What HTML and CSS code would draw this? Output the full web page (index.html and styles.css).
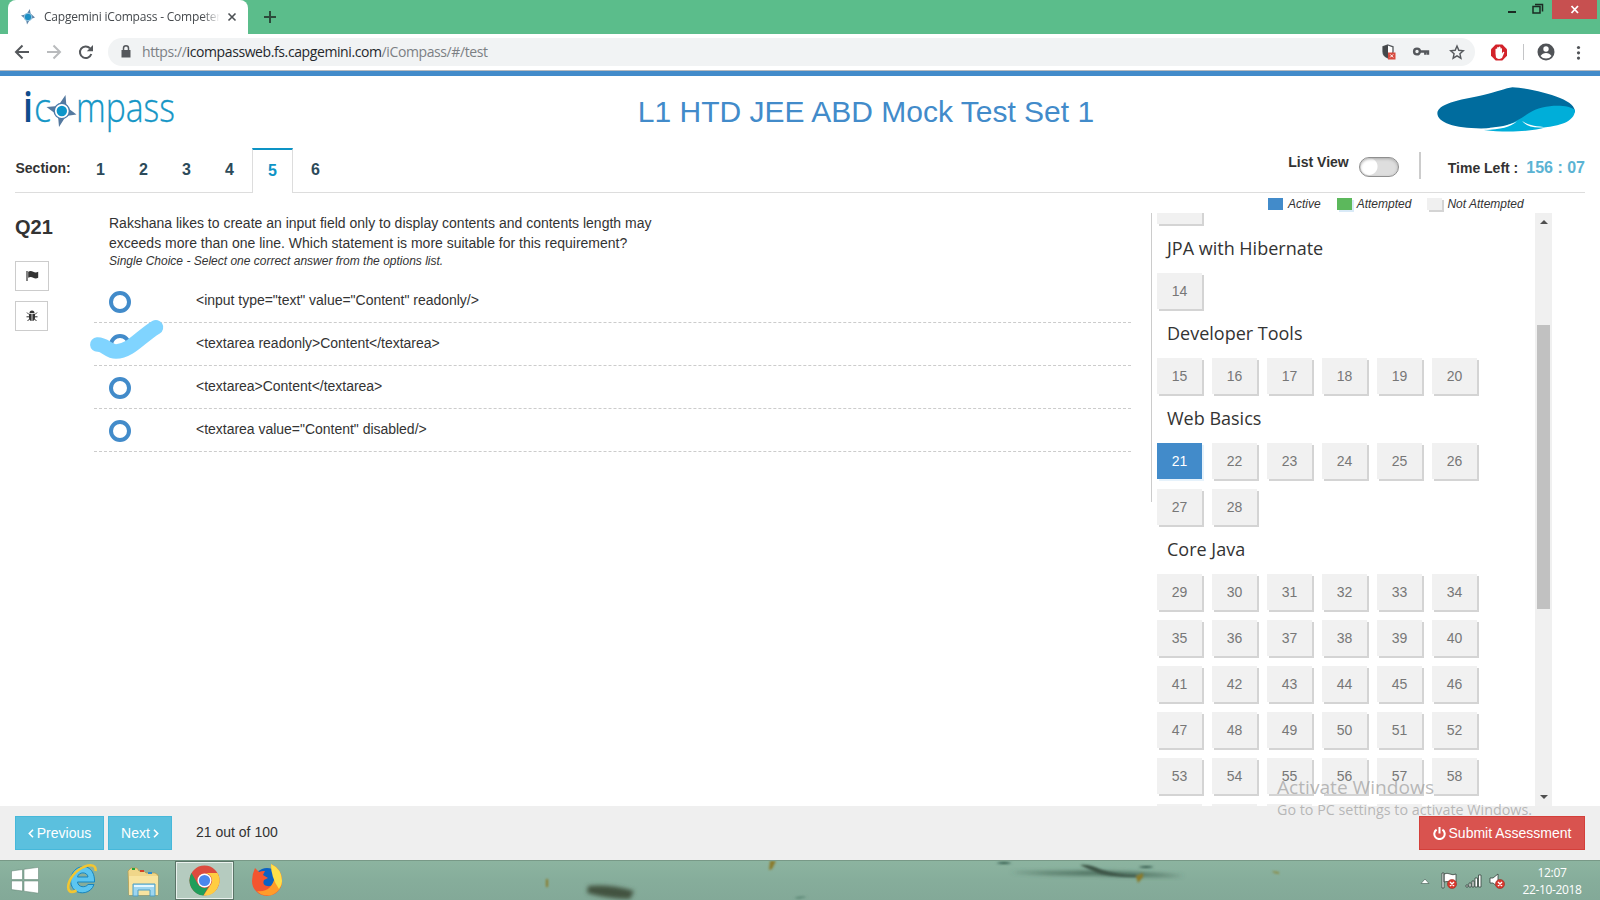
FILE: index.html
```html
<!DOCTYPE html>
<html lang="en">
<head>
<meta charset="utf-8">
<title>Capgemini iCompass - Competency</title>
<link rel="stylesheet" href="styles.css">
</head>
<body>
<div class="screen">
  <header class="tabstrip">
    <div class="tab">
      <svg class="favicon" width="16" height="16" viewBox="0 0 16 16"><path d="M9.800 0l.8 4.500L15 8.500l-4.800 1.800L7 15.500l-1-5L1 6.500l5.500-1.200z" fill="#5d84a8"/><circle cx="8" cy="8" r="3.800" fill="#1d8fc4" stroke="#9dc7e0"/></svg>
      <span class="tab-title">Capgemini iCompass - Competency</span>
      <svg class="tab-close" width="10" height="10" viewBox="0 0 10 10"><path d="M1.500 1.500l7 7M8.500 1.500l-7 7" stroke="#4c5054" stroke-width="1.600"/></svg>
    </div>
    <svg class="newtab" width="12" height="12" viewBox="0 0 12 12"><path d="M6 0v12M0 6h12" stroke="#2c4a3b" stroke-width="2"/></svg>
    <div class="winctl">
      <svg width="92" height="20" viewBox="0 0 92 20"><path d="M3 12h8" stroke="#1b2b23" stroke-width="2"/><path d="M28 6.500h7v6.500h-7zM30 4.500h7.500v7" fill="none" stroke="#1b2b23" stroke-width="1.500"/><path d="M47 0h45v19H47z" fill="#c75050"/><path d="M66.500 6l6.500 7M73 6l-6.500 7" stroke="#fff" stroke-width="1.800"/></svg>
    </div>
  </header>
  <div class="toolbar">
    <svg class="nav" width="80" height="16" viewBox="0 0 80 16" fill="none" stroke-width="2"><path d="M15 8H2M8.500 1.500L2 8l6.500 6.500" stroke="#55585c"/><path d="M33 8h13M39.500 1.500L46 8l-6.500 6.500" stroke="#b9bbbd"/><path d="M76 4.200A5.800 5.800 0 1 0 77.300 10" stroke="#55585c"/><path d="M79 1v6.200h-6.200z" fill="#55585c"/></svg>
    <div class="omnibox">
      <svg class="lock" width="10" height="13" viewBox="0 0 10 13"><path d="M.5 5h9v7.500h-9z" fill="#55585c"/><path d="M2.500 5V3.300a2.500 2.500 0 0 1 5 0V5" fill="none" stroke="#55585c" stroke-width="1.500"/></svg>
      <span class="url">https://<b>icompassweb.fs.capgemini.com</b>/iCompass/#/test</span>
      <svg class="omni-icons" width="84" height="18" viewBox="0 0 84 18"><path d="M7 2l5 1.800v4.700c0 3.500-2.500 5.500-5 6.500-2.500-1-5-3-5-6.500V3.800z" fill="#fff" stroke="#55585c" stroke-width="1.300"/><path d="M7 2v13c-2.500-1-5-3-5-6.500V3.800z" fill="#44474a"/><path d="M7 9.500h7.500v7H7z" fill="#d84a3e"/><path d="M9.200 11.400l3 3m0-3l-3 3" stroke="#fff"/><circle cx="36" cy="8.500" r="2.900" fill="none" stroke="#55585c" stroke-width="2.400"/><path d="M39 8.500h8v3.200M44.300 8.500v3.200" fill="none" stroke="#55585c" stroke-width="2.400"/><path d="M76 3l1.800 4.300 4.500.4-3.400 3 1 4.500-3.900-2.400-3.900 2.400 1-4.500-3.400-3 4.500-.4z" fill="none" stroke="#55585c" stroke-width="1.400"/></svg>
    </div>
    <svg class="ext" width="100" height="20" viewBox="0 0 100 20"><path d="M12.700 2.500h6.600L24 7.200v6.600l-4.700 4.700h-6.600L8 13.800V7.200z" fill="#d3232a"/><path d="M12.500 11.500V7q.8-1 1.600 0V5.500q.8-1 1.700 0V5q.8-1 1.700 0v1.500q.9-.7 1.500 0v5l1-1.500q1.200-.5 1.300.4L19 16q-4 2-6-.5z" fill="#fff"/><path d="M40.500 2v16" stroke="#c4c5c7"/><circle cx="63" cy="10" r="8.500" fill="#505357"/><circle cx="63" cy="7" r="2.700" fill="#fff"/><path d="M57.500 14q2-3 5.500-3t5.500 3q-2 2.500-5.500 2.500T57.500 14z" fill="#fff"/><g fill="#505357"><circle cx="95.500" cy="5.500" r="1.600"/><circle cx="95.500" cy="10.800" r="1.600"/><circle cx="95.500" cy="16.100" r="1.600"/></g></svg>
  </div>

  <div class="brandbar">
    <svg class="logo" width="158" height="50" viewBox="0 0 158 50">
      <g font-family="Open Sans, sans-serif">
        <text x="3" y="36" font-size="42" font-weight="600" fill="#0f4c8c" textLength="10" lengthAdjust="spacingAndGlyphs">i</text>
        <text x="14" y="36" font-size="40" font-weight="300" fill="#1596c6" stroke="#1596c6" stroke-width=".3" textLength="17" lengthAdjust="spacingAndGlyphs">c</text>
        <text x="56" y="36" font-size="40" font-weight="300" fill="#1596c6" stroke="#1596c6" stroke-width=".3" textLength="99" lengthAdjust="spacingAndGlyphs">mpass</text>
      </g>
      <path d="M45.500 9l1 12 10 7.500L46 30l-7 11-1-11.500L26.500 21l11.500-1z" fill="#55799f"/>
      <circle cx="41.800" cy="25" r="7.600" fill="#fff" stroke="#4a79a8" stroke-width="1.400"/><circle cx="41.800" cy="25" r="5.200" fill="#0d95c9"/>
    </svg>
    <h1 class="title">L1 HTD JEE ABD Mock Test Set 1</h1>
    <svg class="brand" width="139" height="46" viewBox="531 259 417 138"><path d="M532 337C534 306 620 294 670 283C712 274 738 262 757 260C800 262 860 276 900 292C930 304 945 318 945 335L810 370L700 382C600 388 532 370 532 337z" fill="#006c9e"/><path d="M945 328C925 311 850 309 806 338C770 362 740 382 672 388C740 397 820 392 857 380C890 376 945 366 945 328z" fill="#00aed9"/><path d="M690 381C725 379 752 372 771 362C752 380 722 387 672 388zM786 360C798 372 830 378 860 379C825 384 798 378 786 360z" fill="#fff"/></svg>
  </div>

  <nav class="sections">
    <span class="sec-label">Section:</span>
    <span class="sec">1</span><span class="sec">2</span><span class="sec">3</span><span class="sec">4</span><span class="sec on">5</span><span class="sec">6</span>
    <div class="status">
      <span class="listview">List View</span>
      <span class="toggle"></span>
      <span class="divider"></span>
      <span class="timelabel">Time Left :</span>
      <span class="time">156 : 07</span>
    </div>
  </nav>

  <main class="main">
    <aside class="qside">
      <div class="qno">Q21</div>
      <button class="tool flag"><svg width="13" height="12" viewBox="0 0 13 12"><path d="M1 1v10" stroke="#333" stroke-width="1.200"/><path d="M2.200 1.700q2.500-1.400 5 0t5 0v6q-2.500 1.400-5 0t-5 0z" fill="#333"/></svg></button>
      <button class="tool bug"><svg width="12" height="12" viewBox="0 0 12 12"><path d="M3.500 3a2.500 2.500 0 0 1 5 0zM3 3.700h2.600V11C4 11 3 9.500 3 8zM6.400 3.700H9V8c0 1.500-1 3-2.600 3z" fill="#333"/><path d="M1 2.500l2 2M11 2.500l-2 2M.5 6.800H3M9 6.800h2.500M1.500 11L3.500 9M10.500 11l-2-2" stroke="#333"/></svg></button>
    </aside>
    <section class="question">
      <p class="qtext">Rakshana likes to create an input field only to display contents and contents length may<br>exceeds more than one line. Which statement is more suitable for this requirement?</p>
      <p class="hint">Single Choice - Select one correct answer from the options list.</p>
      <ul class="options">
        <li><span class="ring"></span><span>&lt;input type="text" value="Content" readonly/&gt;</span></li>
        <li><span class="ring"></span><span>&lt;textarea readonly&gt;Content&lt;/textarea&gt;</span>
          <svg class="tick" width="90" height="50" viewBox="85 310 90 50"><path d="M97.300 344.500C105 344 108 351.500 116 351.500C130 351.500 140 337 156 327.200" fill="none" stroke="#80d4ff" stroke-width="14.500" stroke-linecap="round"/></svg></li>
        <li><span class="ring"></span><span>&lt;textarea&gt;Content&lt;/textarea&gt;</span></li>
        <li><span class="ring"></span><span>&lt;textarea value="Content" disabled/&gt;</span></li>
      </ul>
    </section>
    <section class="side">
      <div class="legend"><i class="sw active"></i><span>Active</span><i class="sw done"></i><span>Attempted</span><i class="sw"></i><span>Not Attempted</span></div>
      <div class="palette">
        <div class="plist">
          <div class="grid"><a></a></div>
          <h2>JPA with Hibernate</h2>
          <div class="grid"><a>14</a></div>
          <h2>Developer Tools</h2>
          <div class="grid"><a>15</a><a>16</a><a>17</a><a>18</a><a>19</a><a>20</a></div>
          <h2>Web Basics</h2>
          <div class="grid"><a class="cur">21</a><a>22</a><a>23</a><a>24</a><a>25</a><a>26</a><a>27</a><a>28</a></div>
          <h2>Core Java</h2>
          <div class="grid"><a>29</a><a>30</a><a>31</a><a>32</a><a>33</a><a>34</a><a>35</a><a>36</a><a>37</a><a>38</a><a>39</a><a>40</a><a>41</a><a>42</a><a>43</a><a>44</a><a>45</a><a>46</a><a>47</a><a>48</a><a>49</a><a>50</a><a>51</a><a>52</a><a>53</a><a>54</a><a>55</a><a>56</a><a>57</a><a>58</a><a></a><a></a><a></a><a></a><a></a><a></a></div>
        </div>
        <div class="scroll"><i class="up"></i><i class="thumb"></i><i class="down"></i></div>
      </div>
    </section>
  </main>

  <footer class="actions">
    <button class="btn prev"><svg width="6" height="9" viewBox="0 0 6 9"><path d="M5 .7L1.300 4.500 5 8.300" fill="none" stroke="#fff" stroke-width="1.600"/></svg>Previous</button>
    <button class="btn next">Next<svg width="6" height="9" viewBox="0 0 6 9"><path d="M1 .7l3.700 3.800L1 8.300" fill="none" stroke="#fff" stroke-width="1.600"/></svg></button>
    <span class="count">21 out of 100</span>
    <button class="btn submit"><svg width="13" height="13" viewBox="0 0 13 13"><path d="M3.600 2.600a5.200 5.200 0 1 0 5.800 0M6.500 0v6.500" fill="none" stroke="#fff" stroke-width="2"/></svg>Submit Assessment</button>
  </footer>

  <svg class="watermark" width="270" height="50" viewBox="0 0 270 50" font-family="Open Sans, sans-serif" fill="#a0a0a0" fill-opacity=".72"><text x="2" y="24" font-size="19" textLength="157" lengthAdjust="spacingAndGlyphs">Activate Windows</text><text x="2" y="45" font-size="14.500" textLength="255" lengthAdjust="spacingAndGlyphs">Go to PC settings to activate Windows.</text></svg>

  <div class="taskbar">
    <svg class="wall" width="1600" height="39" viewBox="0 0 1600 39">
      <defs><filter id="soft" x="-20%" y="-80%" width="140%" height="260%"><feGaussianBlur stdDeviation="2"/></filter><filter id="fine" x="-50%" y="-80%" width="200%" height="260%"><feGaussianBlur stdDeviation=".8"/></filter></defs>
      <path d="M588 25q22-2 46 5l-4 8q-22 0-43-6z" fill="#43523f" filter="url(#soft)"/>
      <path d="M1010 11q50 0 80-1 50 1 95 5-50 1-90-1-50 0-85-3z" fill="#3f6251" filter="url(#soft)"/>
      <g filter="url(#fine)"><path d="M1080 4q10-1 22 5 16 5 35 5v2q-30 0-42-5z" fill="#3d5547"/><path d="M546 18h2v8h-2zM770 0h6l-4 8-3 1zM1136 15l7-3v4l-5 6z" fill="#8a7a2c"/><path d="M1272 10l7 1v2l-5-1z" fill="#8a8a40"/><path d="M996 2q8-2 16 0-8 2-16 0zM1138 6q9-2 16 0-8 2-16 0z" fill="#31574a"/><path d="M794 37q6-3 13-1l-8 2z" fill="#5f8a78"/></g>
    </svg>
    <svg class="start" width="28" height="27" viewBox="0 0 28 27"><path d="M.5 4L11.500 2.500V12.500H.5zM13 2.300L27.500.3v12.200H13zM.5 14h11v10L.5 22.600zM13 14h14.500v12.200L13 24.200z" fill="#fff" stroke="#5d7f6e" stroke-width=".5"/></svg>
    <svg class="ie" width="32" height="32" viewBox="0 0 32 32"><path d="M28.500 19H11.500c.5 5.500 8 6 10.500 2.500h6C25 30.500 14 32 8.500 27 2 21 4 8 13 4.500 22 1 29 8 28.500 19zM11.500 14H22c-.5-5.500-9.500-5.500-10.500 0z" fill="#5cc5f0" stroke="#1985bd"/><path d="M29.500 8C30.500 0 21 1 12.500 7 4 13 0 24 3.500 28c1.500 1.500 5 .5 7-.5" fill="none" stroke="#f2c632" stroke-width="2.600"/></svg>
    <svg class="folder" width="34" height="32" viewBox="0 0 34 32"><path d="M2 5l3-3h6l2 3h5l2 2h9l3 2v20H3z" fill="#f0d689" stroke="#b79a4b" stroke-width=".7"/><path d="M6 2h3v2H6z" fill="#22a33b"/><path d="M14 4h4v2h-4z" fill="#d34328"/><path d="M22 6h4v2h-4z" fill="#2b8bd0"/><path d="M3 10h29v19H3z" fill="#f8e4a0"/><path d="M7 18h22v12h-5v-6H12v6H7z" fill="#9dd5ef" stroke="#4f9fc4"/><path d="M8 20h20" stroke="#e4f7ff" stroke-width="2"/></svg>
    <div class="running"><svg width="31" height="31" viewBox="-15.500 -15.500 31 31"><circle r="15" fill="#dc4b3e"/><path d="M-13-7.500L-6.500 3.700A7.500 7.500 0 0 0 3.700 6.500L-1 15A15 15 0 0 1-13-7.500z" fill="#1f9e5b"/><path d="M0-7.500H13A15 15 0 0 1-1 15L6.500 3.750A7.500 7.500 0 0 0 0-7.500z" fill="#ffcd42"/><circle r="7" fill="#fff"/><circle r="5.600" fill="#4a87ee"/></svg></div>
    <svg class="fox" width="32" height="32" viewBox="0 0 32 32"><circle cx="16" cy="17" r="13" fill="#0b62c4"/><path d="M4 4l4 4q3-1.500 6-1l-2 4 5 3-4 2q-2 5 3 6 7 1 9-6 1-9-5-16 11 5 11 17A15 15 0 0 1 1 17Q1 10 4 4z" fill="#f4552f"/><path d="M20 0q11 5 11 17a15 15 0 0 1-12 14.500Q10 32 6 27q14 2 18-14Q20 8 20 0z" fill="#ff9c2a"/><path d="M20 0q11 5 11 17 0 4-3 8Q20 14 20 0z" fill="#ffe04a"/></svg>
    <svg class="tray" width="90" height="20" viewBox="0 0 90 20"><path d="M1 12.500h8l-4-4.500z" fill="#fff" stroke="#50695e" stroke-width=".7"/><path d="M22 2h2v15h-2zM24 3q3-1.500 6 0t6 0v8q-3 1-6 0t-6 0z" fill="#fff" stroke="#36423c" stroke-width=".8"/><path d="M46 14h2v2h-2zM49 12h2v4h-2zM52 10h2v6h-2zM55 7h2.500v9H55zM58.500 4H61v12h-2.500z" fill="#fff" stroke="#36423c" stroke-width=".8"/><path d="M70 7h3l5-4v13l-5-4h-3z" fill="#fff" stroke="#36423c" stroke-width=".8"/><g fill="#d8372d" stroke="#8d2a22" stroke-width=".5"><circle cx="32" cy="13" r="4.600"/><circle cx="80" cy="13" r="4.600"/></g><path d="M30 11l4 4m0-4l-4 4M78 11l4 4m0-4l-4 4" stroke="#fff" stroke-width="1.400"/></svg>
    <div class="clock"><span class="hm">12:07</span><span class="dmy">22-10-2018</span></div>
  </div>
</div>
</body>
</html>
```

FILE: styles.css
```css
* { box-sizing: border-box; }
body { margin: 0; background: #fff; font-family: "Liberation Sans", Arial, sans-serif; font-size: 14px; color: #333; }
.screen { position: relative; width: 1600px; height: 900px; overflow: hidden; display: flex; flex-direction: column; }
svg { display: block; flex: none; }
p, h1, h2, ul { margin: 0; padding: 0; font-weight: normal; }

/* Browser window */
.tabstrip { height: 34px; flex: none; background: #5bbd8b; display: flex; padding-left: 8px; }
.tab { width: 240px; height: 34px; background: #fff; border-radius: 8px 8px 0 0; display: flex; align-items: center; padding-left: 12px; }
.tab-title { width: 176px; margin-left: 8px; font: 12px/18px "Open Sans", sans-serif; letter-spacing: -.2px; color: #45494d; white-space: nowrap; overflow: hidden; -webkit-mask-image: linear-gradient(90deg, #000 90%, transparent 100%); mask-image: linear-gradient(90deg, #000 90%, transparent 100%); }
.tab-close { margin-left: 7px; }
.newtab { margin: 11px 0 0 16px; }
.winctl { margin-left: auto; padding-right: 3px; }
.toolbar { height: 37px; flex: none; display: flex; align-items: center; padding: 0 3px 1px 14px; border-bottom: 1px solid #b5bac0; }
.omnibox { width: 1367px; height: 28px; margin-left: 14px; padding: 0 10px 0 13px; background: #f1f3f4; border-radius: 14px; display: flex; align-items: center; }
.url { margin-left: 11px; font: 14px/20px "Open Sans", sans-serif; letter-spacing: -.4px; color: #7c8084; white-space: nowrap; }
.url b { font-weight: 400; color: #25282c; }
.omni-icons { margin-left: auto; }
.ext { margin-left: 8px; }

/* Assessment header */
.brandbar { height: 77px; flex: none; border-top: 5px solid #428bca; display: flex; align-items: flex-start; padding: 11px 23px 0 20px; }
.logo { margin-top: -1px; overflow: visible; }
.title { flex: 1; text-align: center; font-size: 30px; line-height: 36px; color: #428bca; padding: 7px 0 0 117px; }
.brand { margin-right: 1px; }
.sections { height: 45px; flex: none; display: flex; margin: 0 15px; background: linear-gradient(#ddd, #ddd) bottom / 100% 1px no-repeat; }
.sec-label { width: 65px; padding: 12px 0 0 .5px; line-height: 16px; font-weight: bold; }
.sec { width: 41px; margin-right: 2px; height: 45px; padding-top: 13px; text-align: center; font-size: 16px; line-height: 18px; font-weight: bold; color: #2c4a5a; }
.sec.on { background: #fff; border: 1px solid #ddd; border-top: 2px solid #0d93c5; border-bottom: 0; padding-top: 12px; color: #0d93c5; }
.status { margin-left: auto; display: flex; font-weight: bold; line-height: 16px; }
.listview { padding-top: 6px; }
.toggle { width: 40px; height: 20px; margin: 9px 20px 0 10px; border: 1.500px solid #8f8f8f; border-radius: 10px; background: radial-gradient(circle at 9px 8.500px, #fff 8px, #dedede 9px); box-shadow: inset 0 1px 3px #aaa; }
.divider { width: 2px; height: 27px; margin-top: 4px; background: #ccc; }
.timelabel { margin: 12px 8px 0 27px; }
.time { padding-top: 11px; font-size: 16px; line-height: 17px; color: #5bb3d3; }

/* Question */
.main { height: 613px; flex: none; display: flex; padding-left: 15px; }
.qside { width: 79px; padding-top: 22px; }
.qno { font-size: 20px; font-weight: bold; line-height: 24px; margin-bottom: 22px; }
.tool { display: flex; align-items: center; justify-content: center; width: 34px; height: 30px; padding: 0; margin-bottom: 10px; border: 1px solid #ccc; background: #fff; }
.tool.bug { width: 33px; }
.question { width: 1037px; padding-top: 20px; }
.qtext { padding-left: 15px; line-height: 20px; }
.hint { padding-left: 15px; font-size: 12px; line-height: 16px; font-style: italic; }
.options { margin-top: 11px; list-style: none; }
.options li { position: relative; display: flex; align-items: center; height: 43px; padding: 0 0 2px 15px; border-bottom: 1px dashed #ccc; letter-spacing: -.02px; }
.ring { width: 22px; height: 22px; margin: 4px 65px 0 0; border: 4px solid #428bca; border-radius: 50%; }
.tick { position: absolute; left: -9px; top: -13px; }

/* Question palette */
.side { flex: 1; padding-left: 20px; }
.legend { display: flex; align-items: center; height: 20px; padding: 2px 0 0 117px; font-size: 12px; font-style: italic; }
.legend span { margin-right: 16px; }
.sw { width: 15px; height: 12px; margin-right: 5px; background: #f0f0f0; box-shadow: 2px 2px #d4d4d4; }
.sw.active { background: #428bca; box-shadow: none; }
.sw.done { background: #5cb85c; box-shadow: 2px 2px #d9eaf7; }
.palette { display: flex; height: 593px; overflow: hidden; }
.plist { width: 384px; padding-left: 6px; margin-top: -25px; background: linear-gradient(#ccc, #ccc) 0 0 / 1px 314px no-repeat; }
.plist h2 { height: 39px; padding: 1px 0 0 10px; font: 18px/26px "Open Sans", sans-serif; }
.grid { display: grid; grid-template-columns: repeat(6, 45px); grid-auto-rows: 36px; gap: 10px; margin-bottom: 10px; }
.grid a { background: #f1f1f1; box-shadow: 2px 2px #d4d4d4; color: #777; text-align: center; line-height: 36px; }
.grid a.cur { background: #428bca; box-shadow: 2px 2px #e6f2fb; color: #fff; }
.scroll { width: 17px; height: 593px; padding: 7px 2px 7px; background: #f0f0f0; display: flex; flex-direction: column; align-items: center; }
.up, .down { border: 4px solid transparent; border-top-width: 0; border-bottom: 4px solid #505050; }
.down { margin-top: auto; border-bottom: 0; border-top: 4px solid #505050; }
.thumb { width: 13px; height: 284px; margin-top: 101px; background: #c1c1c1; }

/* Footer */
.actions { height: 54px; flex: none; background: #efefef; display: flex; align-items: center; padding: 0 15px; }
.btn { height: 34px; padding: 0; border: 1px solid #46b8da; background: #5bc0de; color: #fff; font: 14px "Liberation Sans", sans-serif; display: flex; align-items: center; justify-content: center; gap: 3px; }
.prev { width: 89px; margin-right: 4px; }
.next { width: 64px; }
.count { margin-left: 24px; padding-bottom: 2px; }
.submit { width: 166px; margin-left: auto; background: #d9534f; border-color: #d43f3a; gap: 3px; }
.watermark { position: absolute; left: 1275px; top: 770px; }

/* Desktop taskbar */
.taskbar { position: relative; height: 40px; flex: none; border-top: 1px solid #789987; background: linear-gradient(#8cb4a0, #86ad9b 50%, #83a998); display: flex; align-items: flex-start; padding-left: 11px; }
.wall { position: absolute; left: 0; top: 0; }
.start, .ie, .folder, .fox, .tray, .clock, .running { position: relative; }
.start { margin-top: 6px; }
.ie { margin: 2px 0 0 27px; }
.folder { margin: 5px 0 0 28px; }
.running { width: 59px; height: 39px; margin-left: 15px; border: 1px solid #5a7467; box-shadow: inset 0 0 0 1px #e9f1ed; background: #b5cbbf; display: flex; align-items: center; justify-content: center; }
.fox { margin: 3px 0 0 17px; }
.tray { margin: 10px 0 0 auto; }
.clock { width: 90px; display: flex; flex-direction: column; align-items: center; font: 12px/17px "Open Sans", sans-serif; letter-spacing: -.35px; color: #fff; padding: 3px 6px 0 0; }
```
